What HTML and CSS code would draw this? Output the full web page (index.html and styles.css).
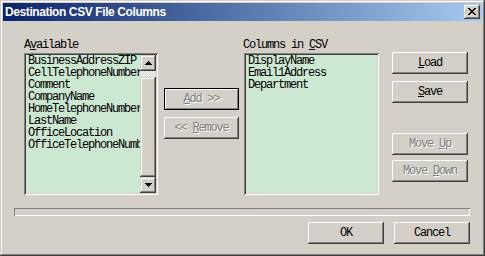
FILE: index.html
```html
<!DOCTYPE html>
<html>
<head>
<meta charset="utf-8">
<link rel="stylesheet" href="styles.css">
</head>
<body>
<div class="window">
  <div class="titlebar">
    <span class="title">Destination CSV File Columns</span>
    <button class="close" aria-label="Close">
      <svg width="8" height="7" viewBox="0 0 8 7"><path fill="#000" d="M0 0h2v1h-2zM6 0h2v1h-2zM1 1h2v1h-2zM5 1h2v1h-2zM2 2h4v1h-4zM3 3h2v1h-2zM2 4h4v1h-4zM1 5h2v1h-2zM5 5h2v1h-2zM0 6h2v1h-2zM6 6h2v1h-2z"/></svg>
    </button>
  </div>
  <div class="content">
    <div class="top">
      <div class="col col-avail">
        <div class="lbl">A<u>v</u>ailable</div>
        <div class="listbox">
          <ul class="items">
            <li>BusinessAddressZIP</li>
            <li>CellTelephoneNumber</li>
            <li>Comment</li>
            <li>CompanyName</li>
            <li>HomeTelephoneNumber</li>
            <li>LastName</li>
            <li>OfficeLocation</li>
            <li>OfficeTelephoneNumber</li>
          </ul>
          <div class="scrollbar">
            <div class="sbtn"><svg width="7" height="4" viewBox="0 0 7 4"><path fill="#000" d="M3 0h1v1h-1zM2 1h3v1h-3zM1 2h5v1h-5zM0 3h7v1h-7z"/></svg></div>
            <div class="track">
              <div class="gap"></div>
              <div class="thumb"></div>
            </div>
            <div class="sbtn"><svg width="7" height="4" viewBox="0 0 7 4"><path fill="#000" d="M0 0h7v1h-7zM1 1h5v1h-5zM2 2h3v1h-3zM3 3h1v1h-1z"/></svg></div>
          </div>
        </div>
      </div>
      <div class="col col-mid">
        <button class="btn default disabled"><span><u>A</u>dd &gt;&gt;</span></button>
        <button class="btn disabled btn-remove"><span>&lt;&lt; <u>R</u>emove</span></button>
      </div>
      <div class="col col-csv">
        <div class="lbl">Columns in <u>C</u>SV</div>
        <div class="listbox csv">
          <ul class="items">
            <li>DisplayName</li>
            <li>Email1Address</li>
            <li>Department</li>
          </ul>
        </div>
      </div>
      <div class="col col-right">
        <button class="btn"><span><u>L</u>oad</span></button>
        <button class="btn btn-save"><span><u>S</u>ave</span></button>
        <button class="btn disabled btn-up"><span>Move <u>U</u>p</span></button>
        <button class="btn disabled btn-down"><span>Move <u>D</u>own</span></button>
      </div>
    </div>
    <div class="progress"></div>
    <div class="bottom">
      <button class="btn"><span>OK</span></button>
      <button class="btn"><span>Cancel</span></button>
    </div>
  </div>
</div>
</body>
</html>
```
FILE: styles.css
```css
* { box-sizing: border-box; margin: 0; padding: 0; }
html, body { margin: 0; background: #d4d0c8; }
body { width: 485px; height: 256px; overflow: hidden; }

.window {
  width: 485px;
  height: 256px;
  background: #d4d0c8;
  padding: 3px;
  display: flex;
  flex-direction: column;
  box-shadow: inset -1px -1px #404040, inset 1px 1px #d4d0c8, inset -2px -2px #808080, inset 2px 2px #fff;
}

.titlebar {
  height: 18px;
  flex: none;
  display: flex;
  align-items: center;
  justify-content: space-between;
  padding-left: 2px;
  padding-right: 2px;
  background: linear-gradient(to right, #0a246a, #a6caf0);
}
.title {
  color: #fff;
  font: bold 12px "Liberation Sans", Arial, sans-serif;
  letter-spacing: -0.4px;
  white-space: nowrap;
}
.close {
  width: 16px;
  height: 14px;
  border: none;
  background: #d4d0c8;
  display: flex;
  align-items: center;
  justify-content: center;
  box-shadow: inset -1px -1px #404040, inset 1px 1px #fff, inset -2px -2px #808080, inset 2px 2px #d4d0c8;
}
.close svg { display: block; margin-left: -1px; margin-top: -1px; }

.content {
  flex: 1;
  font: 12px/12px "Liberation Mono", "Courier New", monospace;
  letter-spacing: -1.2px;
  color: #000;
}
.top { display: flex; align-items: flex-start; height: 174px; }
.col { display: flex; flex-direction: column; flex: none; }

.lbl { height: 12px; margin-top: 18px; margin-bottom: 2px; white-space: nowrap; }
u { text-decoration: underline; text-underline-offset: 1px; }

.listbox {
  height: 142px;
  padding: 2px;
  display: flex;
  background: #cde8d0;
  box-shadow: inset 1px 1px #808080, inset -1px -1px #fff, inset 2px 2px #404040, inset -2px -2px #d4d0c8;
}
.col-avail { margin-left: 21px; width: 134px; }
.col-avail .listbox { width: 134px; }
.items { list-style: none; flex: 1; overflow: hidden; padding-left: 2px; }
.items li { height: 12px; white-space: nowrap; overflow: hidden; }

.scrollbar { width: 16px; flex: none; display: flex; flex-direction: column; }
.sbtn {
  height: 16px;
  flex: none;
  background: #d4d0c8;
  display: flex;
  align-items: center;
  justify-content: center;
  box-shadow: inset -1px -1px #404040, inset 1px 1px #d4d0c8, inset -2px -2px #808080, inset 2px 2px #fff;
}
.sbtn svg { display: block; }
.track { flex: 1; display: flex; flex-direction: column; }
.track .gap {
  height: 6px;
  background: repeating-conic-gradient(#fff 0 25%, #d4d0c8 0 50%) 0 0 / 2px 2px;
}
.thumb {
  flex: 1;
  background: #d4d0c8;
  box-shadow: inset -1px -1px #404040, inset 1px 1px #d4d0c8, inset -2px -2px #808080, inset 2px 2px #fff;
}

.col-mid { margin-left: 6px; width: 75px; padding-top: 67px; }
.col-csv { margin-left: 4px; width: 136px; }
.col-csv .listbox { margin-left: 1px; width: 135px; }
.col-right { margin-left: 13px; width: 76px; padding-top: 31px; }

.btn {
  height: 22px;
  width: 100%;
  border: none;
  background: #d4d0c8;
  font: inherit;
  letter-spacing: inherit;
  color: #000;
  display: flex;
  align-items: center;
  justify-content: center;
  box-shadow: inset -1px -1px #404040, inset 1px 1px #fff, inset -2px -2px #808080, inset 2px 2px #d4d0c8;
}
.btn span { white-space: nowrap; }
.btn.default {
  border: 1px solid #000;
  box-shadow: inset 1px 1px #fff, inset -1px -1px #808080;
}
.btn.disabled { color: #808080; text-shadow: 1px 1px #fff; }
.btn-remove { margin-top: 7px; }
.btn-save { margin-top: 7px; }
.btn-up { margin-top: 30px; }
.btn-down { margin-top: 5px; }

.progress {
  margin-top: 13px;
  margin-left: 11px;
  width: 456px;
  height: 8px;
  box-shadow: inset 1px 1px #808080, inset -1px -1px #fff;
}
.bottom {
  display: flex;
  justify-content: flex-end;
  gap: 10px;
  margin-top: 6px;
  padding-right: 12px;
}
.bottom .btn { width: 76px; }
```
